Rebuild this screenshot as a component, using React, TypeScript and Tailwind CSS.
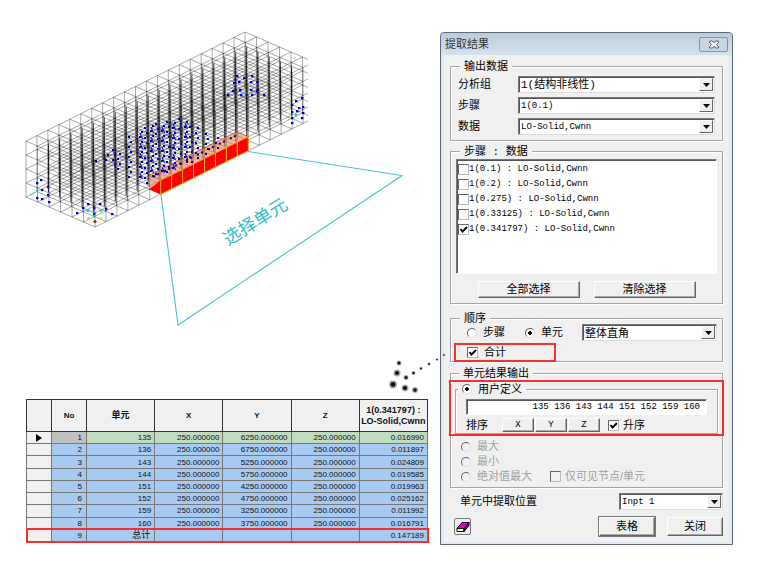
import { ReactNode, useState } from "react";

const MONO = "font-['Liberation_Mono','Noto_Sans_CJK_SC',monospace]";

const STEPS = ["1(0.1)", "1(0.2)", "1(0.275)", "1(0.33125)", "1(0.341797)"];

const ROWS = [
  ["135", "250.000000", "6250.000000", "250.000000", "0.016990"],
  ["136", "250.000000", "6750.000000", "250.000000", "0.011897"],
  ["143", "250.000000", "5250.000000", "250.000000", "0.024809"],
  ["144", "250.000000", "5750.000000", "250.000000", "0.019585"],
  ["151", "250.000000", "4250.000000", "250.000000", "0.019963"],
  ["152", "250.000000", "4750.000000", "250.000000", "0.025162"],
  ["159", "250.000000", "3250.000000", "250.000000", "0.011992"],
  ["160", "250.000000", "3750.000000", "250.000000", "0.016791"],
  ["总计", "", "", "", "0.147189"],
];

// Mesh of 20 x 6 x 4 solid elements in an isometric projection.
const NI = 20;
const NJ = 6;
const NK = 4;

function node(i: number, j: number, k: number) {
  return [26 + i * 10.95 + j * 11.5, 197 - i * 5.45 + j * 5 - k * 14];
}

function meshPaths() {
  const seg = (a: number[], b: number[]) => `M${a[0]} ${a[1]}L${b[0]} ${b[1]}`;
  const paths: string[] = [];
  for (let j = 0; j <= NJ; j++) {
    for (let k = 0; k <= NK; k++) paths.push(seg(node(0, j, k), node(NI, j, k)));
  }
  for (let i = 0; i <= NI; i++) {
    for (let k = 0; k <= NK; k++) paths.push(seg(node(i, 0, k), node(i, NJ, k)));
    for (let j = 0; j <= NJ; j++) paths.push(seg(node(i, j, 0), node(i, j, NK)));
  }
  return paths;
}

// Where the vertical edges of several layers fall on one another
function stackedEdges() {
  const paths: string[] = [];
  for (let m = 2; m < NI + NJ - 1; m++) {
    const back = Math.min(m, NI);
    const near = Math.max(m - NJ, 0);
    const [x1, y1] = node(back, m - back, NK);
    const [x2, y2] = node(near, m - near, 0);
    paths.push(`M${(x1 + x2) / 2} ${y1 + 15}V${y2 - 15}`);
  }
  return paths;
}

// Crack points per column: x, top y, bottom y
const CRACKS = [
  [97, 161, 162],
  [107, 155, 164],
  [114, 150, 168],
  [119, 154, 172],
  [130, 137, 178],
  [141, 132, 181],
  [146, 128, 184],
  [152, 126, 180],
  [157, 124, 178],
  [163, 126, 174],
  [168, 122, 174],
  [174, 123, 168],
  [180, 119, 168],
  [186, 122, 165],
  [191, 127, 162],
  [197, 128, 160],
  [207, 134, 158],
  [217, 138, 150],
];

const LONE_POINTS = [
  [237, 76], [244, 78], [252, 76], [234, 83], [239, 82], [251, 82], [257, 82], [240, 90],
  [251, 90], [228, 95], [233, 91], [241, 95], [252, 95], [257, 91], [264, 95],
  [302, 98], [296, 101], [292, 105], [303, 107], [297, 111], [292, 112], [303, 113],
  [292, 118], [302, 118], [292, 123], [299, 108],
  [41, 180], [37, 183], [48, 187], [42, 190], [37, 198], [49, 202], [42, 199], [48, 195],
  [88, 204], [100, 204], [83, 208], [94, 208], [94, 214], [106, 209], [77, 213], [112, 214],
];

const TRAIL = [
  [399, 363, 2.5], [397, 373, 3.5], [393, 384.5, 4], [406, 377.5, 2.5], [405, 388, 3.5], [415, 390, 3],
  [413.5, 373, 2], [421, 368.5, 1.6], [429, 364, 1.5], [437, 359.5, 1.3], [444, 355, 1.3],
];

function Model() {
  const front = Array.from({ length: 8 }, (_, n) => n + 6);
  const pt = (i: number, j: number, k: number) => node(i, j, k).join(",");
  return (
    <svg viewBox="26 32 402 367" className="pointer-events-none relative z-10 block w-full overflow-visible">
      <defs>
        <clipPath id="model-clip">
          <rect x="24" y="28" width="284" height="202" />
        </clipPath>
      </defs>
      <g clipPath="url(#model-clip)">
        {meshPaths().map((d, n) => (
          <path key={n} d={d} stroke="#000" strokeOpacity="0.4" strokeWidth="0.85" fill="none" />
        ))}
        {stackedEdges().map((d, n) => (
          <path key={n} d={d} stroke="#000" strokeOpacity="0.75" strokeWidth="1.1" />
        ))}
        <polygon
          points={[pt(6, 5, 1), pt(6, 6, 1), pt(14, 6, 1), pt(14, 5, 1)].join(" ")}
          fill="#e8835a"
          fillOpacity="0.6"
          stroke="#b4532e"
          strokeWidth="0.6"
        />
        <polygon
          points={[pt(6, 5, 0), pt(6, 5, 1), pt(6, 6, 1), pt(6, 6, 0)].join(" ")}
          fill="#e8835a"
          fillOpacity="0.6"
        />
        <polygon points={[pt(6, 5, 0), pt(6, 6, 0), pt(6, 6, 1)].join(" ")} fill="#f00" />
        {front.map((i) => (
          <polygon
            key={i}
            points={[pt(i, 6, 0), pt(i + 1, 6, 0), pt(i + 1, 6, 1), pt(i, 6, 1)].join(" ")}
            fill="#f00"
            stroke="#ffb400"
            strokeWidth="0.9"
          />
        ))}
        {CRACKS.map(([x, top, bottom], c) =>
          Array.from({ length: Math.floor((bottom - top) / 5) + 1 }, (_, n) => {
            const y = top + n * 5;
            const dx = (n + c) % 2 ? 1 : -1;
            return (
              <g key={n}>
                {bottom - top > 35 && c % 2 === 1 && n % 2 === 1 && (
                  <path d={`M${x - 1} ${y - 4}l2.5 6`} stroke="#11c" strokeWidth="1.2" />
                )}
                <rect x={x + dx - 1} y={y - 1} width="2" height="2" fill="#0000b8" />
              </g>
            );
          })
        )}
        {front.map((i) => {
          const [x, y] = node(i, 5, 1);
          return (
            <g key={i} fill="#200060">
              <rect x={x + 4} y={y} width="2" height="2" />
              <rect x={x + 8} y={y - 2} width="2" height="2" />
            </g>
          );
        })}
        {LONE_POINTS.map(([x, y], n) => (
          <rect key={n} x={x - 1} y={y - 1} width="2.4" height="2.2" fill="#0000d0" />
        ))}
        <g fill="#10d0d8">
          <circle cx="37" cy="190.5" r="1.2" />
          <circle cx="88" cy="210.5" r="1.6" />
          <circle cx="101" cy="210.5" r="1.4" />
          <circle cx="94.5" cy="216" r="1.6" />
          <circle cx="245" cy="92.5" r="1.2" />
          <circle cx="296" cy="115" r="1.3" />
        </g>
        <path d="M30 195l5 -3" stroke="#3ad08c" />
        <circle cx="88.5" cy="218.5" r="1.4" fill="#c8d820" />
        <circle cx="101" cy="218.5" r="1.4" fill="#d8e020" />
        <circle cx="95" cy="221.5" r="1.6" fill="#7a3500" />
        <circle cx="245" cy="86.5" r="1.3" fill="#e03010" />
      </g>
      <path d="M161 195L178 325L402 175.5L248 151.5" fill="none" stroke="#45c3cf" strokeWidth="1.1" />
      <text
        transform="translate(228 246) rotate(-32)"
        fontSize="18"
        fill="#35bcc8"
        className="font-['Noto_Sans_CJK_SC',sans-serif]"
      >
        选择单元
      </text>
      {TRAIL.map(([x, y, r], n) => (
        <g key={n}>
          <circle cx={x} cy={y} r={r} fill="#888" fillOpacity="0.7" />
          <circle cx={x} cy={y} r={r * 0.6} fill="#111" />
        </g>
      ))}
    </svg>
  );
}

function ResultTable() {
  return (
    <table className="h-[143px] w-full table-fixed border-collapse border border-[#666] bg-[#a6caf0] font-['Liberation_Sans','Noto_Sans_CJK_SC',sans-serif] text-[8px] leading-[11px] text-[#111]">
      <colgroup>
        <col className="w-[25px]" />
        <col className="w-[35px]" />
        <col />
        <col />
        <col />
        <col />
        <col />
      </colgroup>
      <thead>
        <tr className="h-8 bg-[#f0f0f0] text-[9px] *:border *:border-[#333] *:p-0">
          <th />
          <th className="text-[8px]">No</th>
          <th>单元</th>
          <th className="text-[8px]">X</th>
          <th className="text-[8px]">Y</th>
          <th className="text-[8px]">Z</th>
          <th className="whitespace-nowrap">
            1(0.341797) :<br />
            LO-Solid,Cwnn
          </th>
        </tr>
      </thead>
      <tbody>
        {ROWS.map((row, n) => (
          <tr
            key={n}
            className={
              n === 0
                ? "bg-[#c0dcc0] text-right *:border *:border-[#777]"
                : n === ROWS.length - 1
                  ? "relative text-right outline-2 -outline-offset-1 outline-[#f5302f] *:border *:border-[#777]"
                  : "text-right *:border *:border-[#777]"
            }
          >
            <td className="bg-[#f0f0f0] p-0">
              {n === 0 && (
                <svg viewBox="0 0 6 8" className="mx-auto h-2 w-1.5">
                  <path d="M0 0L6 4L0 8Z" fill="#000" />
                </svg>
              )}
            </td>
            <td className={n === 0 ? "bg-[#c0c0c0] p-0 pr-1" : "p-0 pr-1"}>{n + 1}</td>
            {row.map((cell, c) => (
              <td key={c} className={cell === "总计" ? "p-0 pr-1 text-[9px]" : "p-0 pr-[3px]"}>
                {cell}
              </td>
            ))}
          </tr>
        ))}
      </tbody>
    </table>
  );
}

function Group({ title, className = "", children }: { title: ReactNode; className?: string; children: ReactNode }) {
  return (
    <fieldset className={`min-w-0 border border-[#a5a5a5] shadow-[1px_1px_0_#fff,inset_1px_1px_0_#fff] ${className}`}>
      <legend className="h-3 bg-[#f0f0f0] px-1 leading-3">{title}</legend>
      {children}
    </fieldset>
  );
}

interface DropDownProps {
  id: string;
  value: string;
  label?: string;
  className?: string;
}

function DropDown({ id, value, label, className = "" }: DropDownProps) {
  return (
    <div className={`relative h-[17px] ${className}`}>
      <select
        id={id}
        aria-label={label}
        className="block h-full w-full appearance-none border border-t-[#777] border-r-[#ddd] border-b-[#ddd] border-l-[#777] bg-white pl-0.5 leading-[14px] shadow-[inset_1px_1px_0_#555]"
      >
        <option>{value}</option>
      </select>
      <span className="pointer-events-none absolute inset-y-0.5 right-0.5 flex w-3.5 items-center justify-center border border-t-white border-r-[#666] border-b-[#666] border-l-white bg-[#f0f0f0]">
        <svg viewBox="0 0 7 4" className="h-1 w-[7px]">
          <path d="M0 0H7L3.5 4Z" fill="#000" />
        </svg>
      </span>
    </div>
  );
}

interface TickProps {
  children: ReactNode;
  defaultChecked?: boolean;
  disabled?: boolean;
  gap?: string;
}

function Tick({ children, defaultChecked, disabled, gap = "gap-1" }: TickProps) {
  return (
    <label className={disabled ? `flex items-center text-[#a0a0a0] ${gap}` : `flex items-center ${gap}`}>
      <span className="relative block size-[11px]">
        <input
          type="checkbox"
          defaultChecked={defaultChecked}
          disabled={disabled}
          className="peer block size-[11px] appearance-none border border-t-[#666] border-r-[#bbb] border-b-[#bbb] border-l-[#666] bg-white disabled:bg-[#f0f0f0]"
        />
        <svg viewBox="0 0 11 11" className="pointer-events-none absolute inset-0 hidden peer-checked:block">
          <path d="M2.5 5L4.5 7.5L9 3" fill="none" stroke="#000" strokeWidth="1.9" />
        </svg>
      </span>
      {children}
    </label>
  );
}

interface OptionProps {
  name: string;
  children: ReactNode;
  checked?: boolean;
  disabled?: boolean;
  onChange?: () => void;
}

function Option({ name, children, checked = false, disabled, onChange = () => {} }: OptionProps) {
  return (
    <label className={disabled ? "flex items-center gap-1.5 text-[#a0a0a0]" : "flex items-center gap-1.5"}>
      <input
        type="radio"
        name={name}
        checked={checked}
        disabled={disabled}
        onChange={onChange}
        className="block size-2.5 appearance-none rounded-full border border-t-[#666] border-r-[#ddd] border-b-[#ddd] border-l-[#666] bg-white checked:bg-[radial-gradient(circle,#000_2px,#fff_2px)] disabled:bg-[#f0f0f0]"
      />
      {children}
    </label>
  );
}

function Button({ children, className = "" }: { children: ReactNode; className?: string }) {
  return (
    <button
      type="button"
      className={`border border-t-white border-r-[#666] border-b-[#666] border-l-white bg-[#f0f0f0] shadow-[inset_-1px_-1px_0_#aaa] ${className}`}
    >
      {children}
    </button>
  );
}

function ExtractDialog() {
  const [order, setOrder] = useState("element");
  return (
    <section className="flex w-[293px] shrink-0 flex-col self-start rounded-t border border-[#5f6a75] bg-[#dfe9f3] font-['Liberation_Sans','Noto_Sans_CJK_SC',sans-serif] text-[11px] leading-[15px] text-black">
      <header className="flex h-[22px] items-center justify-between rounded-t bg-linear-to-b from-[#bccbdb] to-[#d5e2ef] pr-1 pl-1">
        <h1 className="text-[#333]">提取结果</h1>
        <button
          type="button"
          aria-label="关闭"
          className="flex h-[15px] w-[29px] items-center justify-center rounded-xs border border-[#8595a5] bg-[#c8d6e4]"
        >
          <svg viewBox="0 0 12 9" className="h-[9px] w-3">
            <path d="M2 1H4.5L6 2.8L7.5 1H10L10.8 2L8.4 4.5L10.8 7L10 8H7.5L6 6.2L4.5 8H2L1.2 7L3.6 4.5L1.2 2Z" fill="#f5f5f5" stroke="#555f69" />
          </svg>
        </button>
      </header>
      <div className="mx-[3px] mb-0.5 flex flex-col bg-[#f0f0f0] px-1.5 pt-[5px] pb-1.5">
        <Group title="输出数据" className="px-[7px] pb-[5px] [&>legend]:ml-0.5">
          <div className="grid grid-cols-[60px_1fr] items-center gap-y-1 pt-1">
            <label htmlFor="set">分析组</label>
            <DropDown id="set" value="1(结构非线性)" className={MONO} />
            <label htmlFor="step">步骤</label>
            <DropDown id="step" value="1(0.1)" className={`${MONO} text-[9px]`} />
            <label htmlFor="data">数据</label>
            <DropDown id="data" value="LO-Solid,Cwnn" className={`${MONO} text-[9px]`} />
          </div>
        </Group>
        <Group
          title={<span className={MONO}>步骤 : 数据</span>}
          className="mt-1 px-[5px] pb-[5px] [&>legend]:ml-1"
        >
          <ul
            className={`mt-0.5 h-[115px] border border-t-[#777] border-r-[#fff] border-b-[#fff] border-l-[#777] bg-white pt-0.5 text-[9px] shadow-[inset_1px_1px_0_#555] ${MONO}`}
          >
            {STEPS.map((step, n) => (
              <li key={step} className="pl-px">
                <Tick gap="gap-0" defaultChecked={n === STEPS.length - 1}>
                  {step} : LO-Solid,Cwnn
                </Tick>
              </li>
            ))}
          </ul>
          <div className="mt-[7px] flex justify-center gap-3.5">
            <Button className="h-[17px] w-[102px]">全部选择</Button>
            <Button className="h-[17px] w-[102px]">清除选择</Button>
          </div>
        </Group>
        <Group title="顺序" className="mt-2 px-[5px] pb-px [&>legend]:ml-1">
          <div className="flex items-center pl-[11px]">
            <div className="flex flex-1 items-center gap-5">
              <Option name="order" checked={order === "step"} onChange={() => setOrder("step")}>
                步骤
              </Option>
              <Option name="order" checked={order === "element"} onChange={() => setOrder("element")}>
                单元
              </Option>
            </div>
            <DropDown id="axes" label="坐标系" value="整体直角" className="w-[135px]" />
          </div>
          <div className="mt-1 w-[98px] pl-[11px] outline-2 outline-[#f5302f]">
            <Tick defaultChecked gap="gap-1.5">
              合计
            </Tick>
          </div>
        </Group>
        <Group title="单元结果输出" className="mt-[5px] pb-[3px] [&>legend]:ml-2">
          <div className="mt-[3px] pt-px pr-1 pl-1 outline-2 outline-[#f5302f]">
            <Group
              title={
                <Option name="output" checked>
                  用户定义
                </Option>
              }
              className="px-2.5 pb-px [&_label]:leading-3 [&>legend]:-ml-2"
            >
              <input
                type="text"
                aria-label="用户定义"
                defaultValue="135 136 143 144 151 152 159 160"
                className={`mt-1 block h-4 w-full border border-t-[#777] border-r-[#fff] border-b-[#fff] border-l-[#777] bg-white pr-1.5 text-right text-[9px] shadow-[inset_1px_1px_0_#555] ${MONO}`}
              />
              <div className="mt-[3px] flex h-3.5 items-center">
                <span className="w-9">排序</span>
                <div className={`mr-2 flex gap-px text-[9px] leading-3 ${MONO}`}>
                  <Button className="h-3.5 w-8">X</Button>
                  <Button className="h-3.5 w-8">Y</Button>
                  <Button className="h-3.5 w-8">Z</Button>
                </div>
                <Tick defaultChecked>升序</Tick>
              </div>
            </Group>
          </div>
          <div className="mt-[5px] pl-2.5">
            <Option name="output" disabled>
              最大
            </Option>
            <Option name="output" disabled>
              最小
            </Option>
            <div className="flex gap-[18px]">
              <Option name="output" disabled>
                绝对值最大
              </Option>
              <Tick disabled>仅可见节点/单元</Tick>
            </div>
          </div>
        </Group>
        <div className="mt-[5px] flex items-center justify-between pl-2.5">
          <label htmlFor="position">单元中提取位置</label>
          <DropDown id="position" value="Inpt 1" className={`w-[104px] text-[9px] ${MONO}`} />
        </div>
        <div className="mt-[7px] flex items-center gap-3 pl-1">
          <button
            type="button"
            aria-label="清除"
            className="mr-auto flex size-[17px] items-center justify-center rounded-xs border border-[#777]"
          >
            <svg viewBox="0 0 14 12" className="h-3 w-3.5">
              <path d="M1 7.5L6 1.5H13L8 7.5Z" fill="#e000d8" stroke="#000" />
              <path d="M1 7.5H8V10.5H1Z" fill="#fff" stroke="#000" />
              <path d="M8 7.5L13 1.5V4.5L8 10.5Z" fill="#80007c" stroke="#000" />
            </svg>
          </button>
          <Button className="h-[19px] w-14 outline outline-[#777]">表格</Button>
          <Button className="h-[19px] w-14">关闭</Button>
        </div>
      </div>
    </section>
  );
}

export default function App() {
  return (
    <main className="flex min-h-screen items-start gap-3 bg-white pt-8 pr-[27px] pl-[26px]">
      <div className="min-w-0 flex-1">
        <Model />
        <ResultTable />
      </div>
      <ExtractDialog />
    </main>
  );
}
